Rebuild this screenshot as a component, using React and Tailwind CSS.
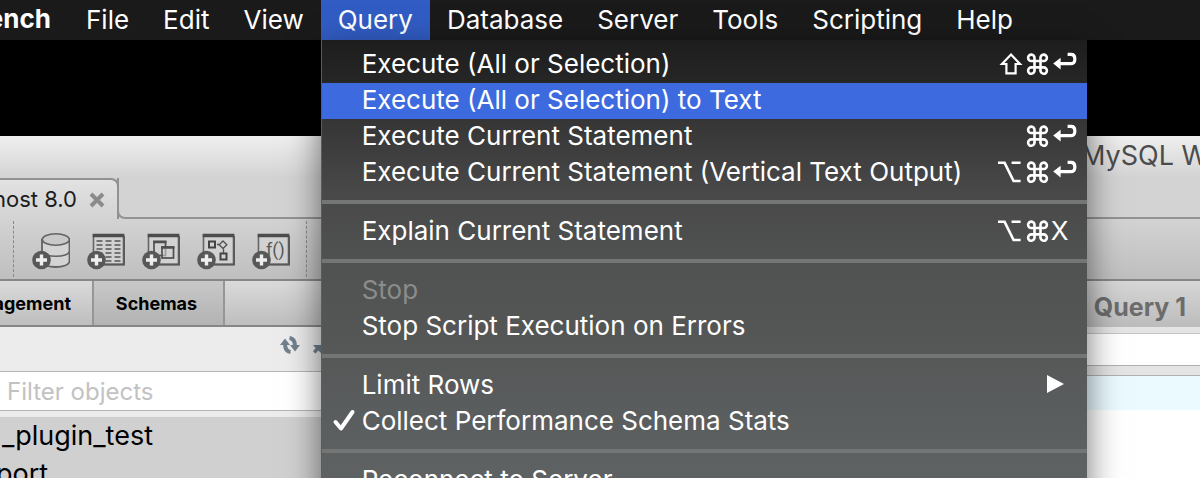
// src/App.jsx
const menus = ['File', 'Edit', 'View', 'Query', 'Database', 'Server', 'Tools', 'Scripting', 'Help'];

const queryMenu = [
  { label: 'Execute (All or Selection)', keys: ['shift', 'cmd', 'return'] },
  { label: 'Execute (All or Selection) to Text', active: true },
  { label: 'Execute Current Statement', keys: ['cmd', 'return'] },
  { label: 'Execute Current Statement (Vertical Text Output)', keys: ['option', 'cmd', 'return'] },
  { separator: true },
  { label: 'Explain Current Statement', keys: ['option', 'cmd', 'X'] },
  { separator: true },
  { label: 'Stop', disabled: true },
  { label: 'Stop Script Execution on Errors' },
  { separator: true },
  { label: 'Limit Rows', submenu: true },
  { label: 'Collect Performance Schema Stats', checked: true },
  { separator: true },
  { label: 'Reconnect to Server' },
];

const KeyGlyph = ({ name }) => {
  if (name === 'X') return <span className="w-[27px] pb-[3px]">X</span>;
  return (
    <svg viewBox="0 0 27 36" className="w-[27px] h-9" fill="none" stroke="currentColor" strokeWidth="2.2" aria-hidden="true">
      {name === 'shift' && <path d="M14 7.5 L23 17 H18.6 V26.3 H9.4 V17 H5 Z" />}
      {name === 'option' && (
        <path strokeWidth="2.6" d="M1 7.8 H7.6 L16.6 26 H23.6 M14.6 7.8 H23.6" />
      )}
      {name === 'cmd' && (
        <path
          strokeWidth="2.6"
          d="M10.5 14 V11 A3.2 3.2 0 1 0 7.3 14 H19.7 A3.2 3.2 0 1 0 16.5 11 V23.4 A3.2 3.2 0 1 0 19.7 20.4 H7.3 A3.2 3.2 0 1 0 10.5 23.4 Z"
        />
      )}
      {name === 'return' && (
        <>
          <path strokeWidth="3.2" d="M7 16.6 H19.5 Q23.8 16.6 23.8 12.4 V11.4 Q23.8 7.3 20 7.3 H16.6" />
          <path stroke="none" fill="currentColor" d="M2.2 16.6 L9.6 10.8 V22.6 Z" />
        </>
      )}
    </svg>
  );
};

const MenuRow = ({ item }) => {
  if (item.separator) return <div role="separator" className="mt-[9px] mb-[10px] h-1 bg-[#747575]" />;
  return (
    <button
      type="button"
      role="menuitem"
      disabled={item.disabled}
      className={`flex w-full h-9 items-center pr-[9px] text-left whitespace-nowrap ${
        item.active ? 'bg-[#3d6ade]' : ''
      } ${item.disabled ? 'text-[#8b8c8c]' : 'text-white'}`}
    >
      <span className="w-10 shrink-0">
        {item.checked && (
          <svg viewBox="0 0 40 36" className="w-10 h-9" fill="none" stroke="currentColor" aria-hidden="true">
            <path d="M13.5 18 L19 24.5 L30.5 8" strokeWidth="4" strokeLinecap="round" strokeLinejoin="round" />
          </svg>
        )}
      </span>
      <span className="flex-1 pb-[3px]">{item.label}</span>
      {item.keys && (
        <span className="flex items-center">
          {item.keys.map((key) => <KeyGlyph key={key} name={key} />)}
        </span>
      )}
      {item.submenu && (
        <svg viewBox="0 0 18 20" className="mr-3.5 mb-1 w-[18px] h-5" fill="currentColor" aria-hidden="true">
          <path d="M1 1 L18 10 L1 19 Z" />
        </svg>
      )}
    </button>
  );
};

const QueryDropdown = () => (
  <div
    role="menu"
    className="absolute top-full left-0 z-10 w-[766px] pt-[7px] pb-2 border-l border-[#5c5c5c] shadow-[0_12px_32px_rgba(0,0,0,0.55)] bg-[linear-gradient(180deg,#1d1d1d_0px,#262626_42px,#363636_82px,#484848_150px,#505151_220px,#555656_300px,#5a5d5e_370px,#5f6262_440px)]"
  >
    {queryMenu.map((item, i) => <MenuRow key={i} item={item} />)}
  </div>
);

const MenuBar = () => (
  <nav className="relative z-10 flex h-10 shrink-0 bg-[#1a1a1a] text-[26px] text-white">
    <button type="button" className="flex w-[69px] items-center justify-end overflow-hidden pb-[3px] pr-[18px] font-bold">
      ench
    </button>
    {menus.map((name) => (
      <div key={name} className="relative">
        <button
          type="button"
          className={`h-10 px-[17px] pb-[3px] ${name === 'Query' ? 'bg-[#315cc3]' : ''}`}
        >
          {name}
        </button>
        {name === 'Query' && <QueryDropdown />}
      </div>
    ))}
  </nav>
);

// Gray window frame shared by every toolbar icon except the database one
const Frame = () => (
  <>
    <rect x="6.5" y="3.5" width="30" height="29" fill="#d2d2d2" stroke="#666" strokeWidth="1.6" />
    <path d="M5.7 3.5 H37.3" stroke="#4c4c4c" strokeWidth="3.4" />
    <path d="M5.7 32.4 H37.3 V4" stroke="#5a5a5a" strokeWidth="2" />
  </>
);

const toolbarIcons = [
  {
    name: 'New schema',
    art: (
      <>
        <path d="M10 7 V29 C10 37 37.5 37 37.5 29 V7" fill="#d4d4d4" stroke="#636363" strokeWidth="1.8" />
        <path d="M10 19 C11 26 37 26 37.5 19" stroke="#636363" strokeWidth="1.6" />
        <ellipse cx="23.8" cy="7.5" rx="13.6" ry="5.8" fill="#c9c9c9" stroke="#636363" strokeWidth="1.6" />
      </>
    ),
  },
  {
    name: 'New table',
    art: (
      <>
        <Frame />
        {[9, 13, 17, 21, 25, 29].map((y) => (
          <path key={y} d={`M9.5 ${y} H15.5 M18.5 ${y} H24.5 M27.5 ${y} H33.5`} stroke="#555" strokeWidth="1.6" />
        ))}
      </>
    ),
  },
  {
    name: 'New view',
    art: (
      <>
        <Frame />
        <rect x="12" y="9.5" width="11.5" height="14" stroke="#4f4f4f" strokeWidth="1.7" />
        <rect x="20" y="15" width="11.5" height="11" fill="#d2d2d2" fillOpacity="0.6" stroke="#4f4f4f" strokeWidth="1.7" />
        <path d="M11 10 H24.5 M19 15.5 H32.5" stroke="#4f4f4f" strokeWidth="2.4" />
      </>
    ),
  },
  {
    name: 'New procedure',
    art: (
      <>
        <Frame />
        <rect x="12" y="9.5" width="6" height="6" stroke="#444" strokeWidth="2" />
        <path d="M20 12.5 H22" stroke="#555" strokeWidth="1.4" />
        <path d="M26 9 L29.8 12.8 L26 16.6 L22.2 12.8 Z M26.5 17 V21" stroke="#555" strokeWidth="1.4" />
        <rect x="23.5" y="21.5" width="6" height="6" stroke="#444" strokeWidth="2" />
      </>
    ),
  },
  {
    name: 'New function',
    art: (
      <>
        <Frame />
        <text x="14" y="24" fontSize="18" fill="#5a5a5a" fontFamily="Roboto, sans-serif">f()</text>
      </>
    ),
  },
];

const Toolbar = () => (
  <div className="flex items-center h-[62px] border-b-2 border-[#868686] bg-linear-to-b from-[#d3d3d3] to-[#bfbfbf]">
    <div className="ml-[13px] mr-[18px] h-14 border-l border-dashed border-[#888]" />
    <div className="flex gap-[17px] pt-[3px]">
      {toolbarIcons.map(({ name, art }) => (
        <button key={name} type="button" aria-label={name}>
          <svg viewBox="0 0 38 38" className="w-[38px] h-[38px]" fill="none" aria-hidden="true">
            {art}
            <circle cx="9.5" cy="28" r="9.3" fill="#585858" />
            <path d="M9.5 22.5 V33.5 M4 28 H15" stroke="#eee" strokeWidth="3.4" />
          </svg>
        </button>
      ))}
    </div>
    <div className="ml-4 h-14 border-l border-dashed border-[#888]" />
  </div>
);

const WindowHeader = () => (
  <header className="bg-[linear-gradient(180deg,#efefef,#d3d3d3_42px)]">
    <div className="flex items-center justify-end h-[42px] pb-0.5">
      <h1 className="w-[119px] overflow-hidden whitespace-nowrap text-[27px] text-[#4c4c4c]">MySQL W</h1>
    </div>
    <div className="flex h-[41px]">
      <div className="flex items-center justify-end w-[119px] gap-3 pr-3 overflow-hidden whitespace-nowrap rounded-tr-lg border-t-2 border-r-2 border-[#929292] bg-linear-to-b from-[#e2e2e2] to-[#d3d3d3] text-[22px] text-[#1c1c1c]">
        <span>host 8.0</span>
        <button type="button" aria-label="Close tab">
          <svg viewBox="0 0 16 16" className="w-4 h-4" stroke="#8b8b8b" strokeWidth="4" aria-hidden="true">
            <path d="M2 2 L14 14 M14 2 L2 14" />
          </svg>
        </button>
      </div>
      <div className="flex-1 -ml-0.5 rounded-bl-lg border-b-2 border-l-2 border-[#929292] bg-[#d3d3d3]" />
    </div>
  </header>
);

const Sidebar = () => (
  <aside className="flex flex-col w-[330px] shrink-0 bg-[#ececec]">
    <div className="flex h-[46px] border-b-2 border-[#868686] bg-linear-to-b from-[#dadada] to-[#bebebe] text-lg font-bold text-black">
      <button type="button" className="flex items-center justify-end w-[92px] pt-0.5 pr-[21px] overflow-hidden">agement</button>
      <button type="button" className="w-[133px] pt-0.5 pr-1 border-x-2 border-[#969696] bg-linear-to-b from-[#c8c8c8] to-[#b3b3b3]">
        Schemas
      </button>
    </div>
    <div className="flex items-center justify-end gap-3 h-11 pb-2">
      <button type="button" aria-label="Refresh">
        <svg viewBox="0 0 20 18" className="w-5 h-[18px]" aria-hidden="true">
          <g fill="none" stroke="#71808d" strokeWidth="4">
            <path d="M10.5 16 C6.5 15.5 5 12 5 8" />
            <path d="M9.5 2 C13.5 2.5 15 6 15 10" />
          </g>
          <path d="M0 9 L5 2.5 L10 9 Z M10 9 H20 L15 15.5 Z" fill="#71808d" />
        </svg>
      </button>
      <button type="button" aria-label="Expand">
        <svg viewBox="0 0 18 18" className="w-[18px] h-[18px]" fill="#71808d" aria-hidden="true">
          <path d="M1 9 H9 V17 L6.4 14.6 L3.5 17.5 L1 15.4 L3.6 12 Z" />
        </svg>
      </button>
    </div>
    <input
      type="text"
      aria-label="Filter objects"
      placeholder="Filter objects"
      className="h-10 w-full border-y border-[#b5b5b5] bg-white pl-[7px] text-2xl placeholder:text-[#c2c2c2]"
    />
    <ul className="mt-1.5 flex-1 bg-[#d0d0d0] text-[27px] leading-[38px] text-black">
      <li className="pl-0.5">_plugin_test</li>
      <li className="-ml-1">port</li>
    </ul>
  </aside>
);

const Editor = () => (
  <main className="flex flex-col flex-1 bg-white">
    <div className="flex items-center justify-end h-[46px] pt-2 pr-[14px] bg-linear-to-b from-[#d6d6d6] to-[#bcbcbc]">
      <button type="button" className="text-[25px] font-bold text-[#6c6c6c]">Query 1</button>
    </div>
    <div className="h-[7px] border-b border-[#c4c4c4] bg-[#e4e4e4]" />
    <div className="h-[31px]" />
    <div className="h-[11px] border-y border-[#b0b0b0] bg-[#e4e4e4]" />
    <div className="h-[34px] bg-[#eafaff]" />
  </main>
);

export default function App() {
  return (
    <div className="flex flex-col h-screen overflow-hidden bg-black font-[Inter,sans-serif]">
      <MenuBar />
      <div className="mt-24 flex flex-col flex-1">
        <WindowHeader />
        <Toolbar />
        <div className="flex flex-1">
          <Sidebar />
          <Editor />
        </div>
      </div>
    </div>
  );
}
